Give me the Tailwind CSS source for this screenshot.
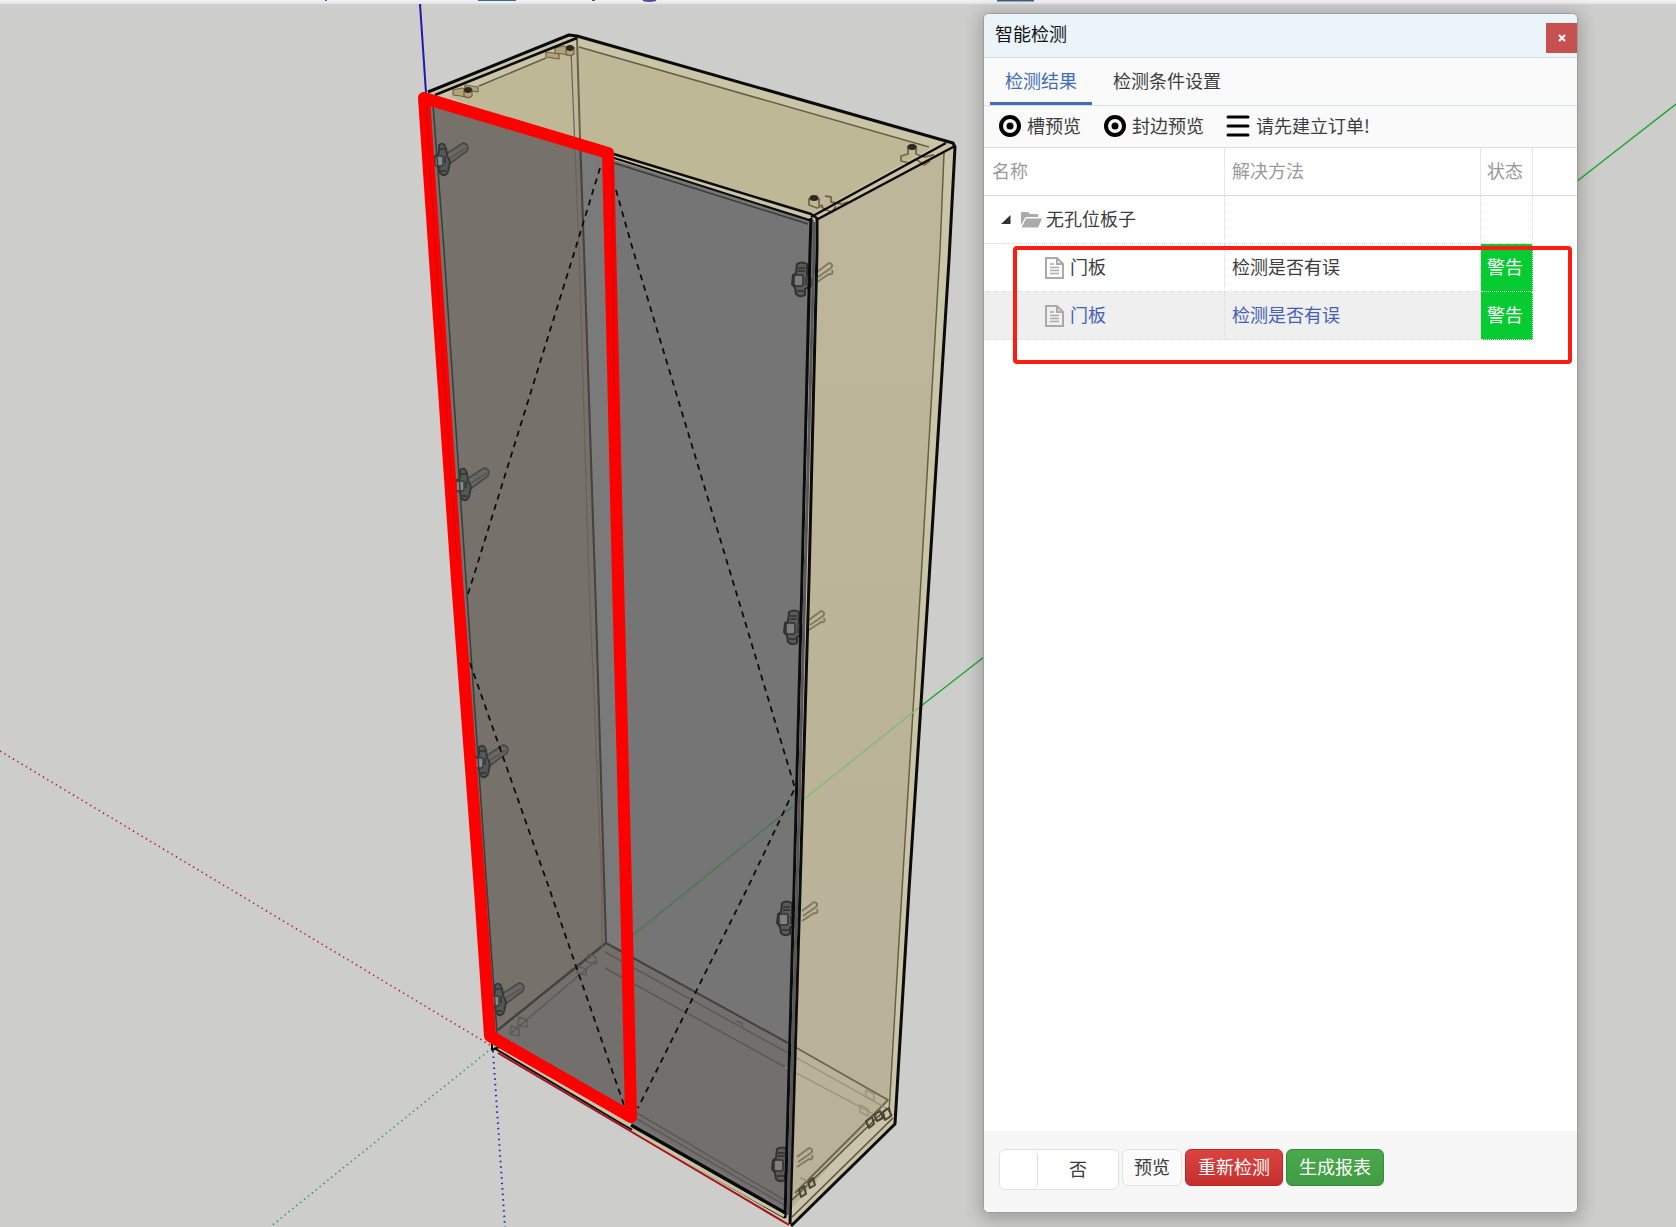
<!DOCTYPE html>
<html lang="zh-CN">
<head>
<meta charset="utf-8">
<meta name="viewport" content="width=device-width, initial-scale=1">
<title>智能检测</title>
<script src="https://cdn.jsdelivr.net/npm/@tailwindcss/browser@4"></script>
</head>
<body class="bg-[#cdcdcb] font-['Noto_Sans_CJK_SC',sans-serif] text-[18px] leading-6 text-[#3c3c3c]">
<main class="relative flex min-h-screen justify-end overflow-hidden pt-[13px] pr-[98px] pb-[14px]">

  <!-- 3D viewport -->
  <svg class="absolute inset-0 h-full w-full" viewBox="0 0 1676 1227" preserveAspectRatio="xMidYMid slice" role="img" aria-label="柜体模型" fill="none" stroke-linejoin="round">
    <defs>
      <linearGradient id="strip" x1="0" y1="0" x2="0" y2="1"><stop offset="0" stop-color="#f3f3f7"/><stop offset="0.6" stop-color="#ececee"/><stop offset="1" stop-color="#cdcdcb"/></linearGradient>
      <linearGradient id="side" x1="0" y1="0" x2="0" y2="1"><stop offset="0" stop-color="#bdb69a"/><stop offset="1" stop-color="#b9b298"/></linearGradient>
      <g id="hingeL">
        <path d="M3 -6 L20 -17 Q27 -16 24 -9 L5 5" stroke="#4a4a48" stroke-width="1.8" fill="#696764"/>
        <path d="M6 -1 L23 -12" stroke="#50504e" stroke-width="1.2"/>
        <path d="M-4 -15 Q1 -19 3 -12 L4 -5 L7 2 L5 12 Q2 18 -3 13 L-4 7 L-8 5 V-4 L-4 -7 Z" fill="#555756" stroke="#333635" stroke-width="1.8"/>
        <rect x="-8" y="-4" width="8" height="10" rx="2" fill="#85898a" stroke="#383b3a" stroke-width="1.3"/>
        <path d="M-3 -11 h5 M-2 11 h5 M2 -4 v7" stroke="#2f3130" stroke-width="1.3"/>
      </g>
      <g id="hingeR">
        <path d="M16 -8 L28 -17 Q33 -16 30 -12 L17 -3 M16 2 L28 -6 Q33 -5 31 -10" stroke="#807960" stroke-width="2"/>
        <path d="M-4 -16 Q1 -19 6 -16 L6 -5 L11 0 L10 6 L4 9 L4 15 Q-1 18 -5 14 L-6 8 L-9 4 L-8 -5 L-5 -7 Z" fill="#595a59" stroke="#303130" stroke-width="2"/>
        <rect x="-7" y="-5" width="9" height="11" rx="2" fill="#7d7f7e" stroke="#303130" stroke-width="1.5"/>
        <path d="M-3 -12 h7 M-3 -9 h7 M-4 11 h7 M5 -3 v8" stroke="#303130" stroke-width="1.3"/>
      </g>
      <g id="peg" stroke="#6f6248" stroke-width="1.2" fill="#b3a478">
        <path d="M-13 -1 L-4 -3 L3 1 V7 L-5 5 L-13 4 Z"/>
        <path d="M-2 -1 V5 Q2 8 6 5 V-2"/>
        <ellipse cx="2" cy="-1" rx="4" ry="3" fill="#2e2822" stroke="none"/>
      </g>
    </defs>

    <rect width="1676" height="6" y="-1" fill="url(#strip)"/>
    <path d="M478 0h38" stroke="#2f7280" stroke-width="2"/>
    <path d="M997 0h37" stroke="#3c5f80" stroke-width="3"/>
    <path d="M643 0q6 2 13 0M325 0h2M592 0h3" stroke="#5548a0" stroke-width="2"/>

    <!-- axes -->
    <path d="M420 4L426 93" stroke="#2019b0" stroke-width="2"/>
    <path d="M1576 182L1676 104M984 657L921 706" stroke="#1ca82c" stroke-width="1.5"/>
    <path d="M0 751L490 1045" stroke="#b8202a" stroke-width="1.5" stroke-dasharray="1.5 3.5"/>
    <path d="M492 1048L270 1227" stroke="#2f9e52" stroke-width="1.5" stroke-dasharray="1.5 3.5"/>
    <path d="M493 1051L505 1227" stroke="#2a2ab0" stroke-width="2" stroke-dasharray="1.5 4"/>

    <!-- carcass -->
    <path d="M428 94L573 36L955 144L929 580L909 890L895 1124L791 1226L494 1050Z" fill="#cac4a8"/>
    <path d="M448 97L578 46L930 148L811 215L607 152Z" fill="#bfb897"/>
    <path d="M818 219L944 151L921 580L902 890L888 1102L792 1208L800 890L809 580Z" fill="url(#side)"/>

    <!-- doors -->
    <path d="M430 104L607 158L814 220L802 580L794 890L787 1213L632 1124L490 1037Z" fill="#757575"/>
    <path d="M430 104L580 150L584 250L595 580L606 943L495 1032Z" fill="#77716c"/>
    <path d="M606 943L788 1043L787 1210L630 1120L497 1035Z" fill="#736f6c"/>
    <path d="M581 152L614 160L630 955L606 943L595 580Z" fill="#7a7a7a"/>

    <path d="M577 38L580 138" stroke="#67604a" stroke-width="2"/>
    <g stroke="#45413d" stroke-width="2">
      <path d="M580 138L584 250L595 580L606 943L788 1043"/>
      <path d="M606 943L498 1030" stroke-width="2.5"/>
      <path d="M571 50L579 250L589 580L602 890V948" stroke="#68625a" stroke-width="1.2"/>
      <path d="M605 952L788 1053M605 968L785 1067M597 960L510 1034M637 1113L786 1201M637 1119L786 1206" stroke="#5c5956" stroke-width="1.5"/>
      <path d="M788 1043L888 1100L795 1193" stroke="#6d6650" stroke-width="1.8"/>
      <path d="M788 1053L886 1108M785 1067L881 1118" stroke="#968f75" stroke-width="1.3"/>
    </g>
    <path d="M588 954l8 3v7l-9-2zM578 966l8 3v6l-9-2zM519 1017l8 3v7l-9-2zM511 1026l8 3v7l-9-2zM736 1021l6 2v5" stroke="#5d5a57" stroke-width="1.5"/>
    <g stroke="#665f48" stroke-width="1.5">
      <path d="M579 47L929 147M479 86L546 58M944 153L940 250L921 580L902 890L889 1112"/>
      <path d="M893 1118L792 1217M887 1108L792 1200" stroke="#57513e"/>
      <path d="M866 1090l8 4v7l-8-4zM860 1105l8 4v7l-8-4zM800 1178l8 3v6" stroke="#9b9379"/>
      <path d="M866 1121l6-4 2 7-5 4zM874 1115l6-4 3 7-6 3zM883 1112l6-4 2 8-6 4zM889 1118l3-4M799 1190l5-4 2 8-5 3zM808 1182l5-4 2 7-5 3z" stroke="#4a4435" stroke-width="2"/>
    </g>

    <path d="M921 706L803 800" stroke="#86b880" stroke-width="1.5"/>
    <path d="M793 806L633 935" stroke="#467a4e" stroke-width="1.5"/>

    <!-- hardware -->
    <path d="M465 85L478 87V92L465 90ZM546 52L559 54V59L546 57Z" fill="#b3a478" stroke="#6f6248" stroke-width="1.2"/>
    <use href="#peg" x="466" y="91"/><use href="#peg" x="568" y="49"/>
    <path d="M908 146v8l-7 2v5l8 2l7-4l8 6l6-4M916 146v8l8 3l10-2M809 198v7l8 3l6-3M819 198v7l7 5l6 2l4-6M825 196l6 1v5l10 2l7-2" stroke="#75664a" stroke-width="1.8"/>
    <ellipse cx="912" cy="147" rx="4.500" ry="3" fill="#2e2822"/>
    <ellipse cx="814" cy="198" rx="4.500" ry="3" fill="#2e2822"/>
    <use href="#hingeL" x="443" y="160"/><use href="#hingeL" x="464" y="485"/><use href="#hingeL" x="483" y="762"/><use href="#hingeL" x="499" y="1000"/>
    <use href="#hingeR" x="801" y="280"/><use href="#hingeR" x="793" y="628"/><use href="#hingeR" x="786" y="919"/><use href="#hingeR" x="781" y="1165"/>

    <!-- outlines -->
    <g stroke="#0b0b0b" stroke-width="3">
      <path d="M428 92L569 35L577 36L953 143L955 147L949 260L929 580L909 890L895 1124L791 1226"/>
      <path d="M435 95L577 38M811 217L946 143" stroke-width="2.5"/>
      <path d="M607 152L811 214L818 219L955 146" stroke-width="2.5"/>
      <path d="M614 158L812 221" stroke-width="2"/>
      <path d="M614 163L808 224" stroke="#3a3a3a" stroke-width="1.5"/>
      <path d="M817 219V250L809 580L800 890L790 1224"/>
      <path d="M811 218L810 250L802 580L794 890L785 1218"/>
      <path d="M631 1125L787 1214" stroke-width="3.5"/>
      <path d="M494 1048L622 1124L785 1218" stroke-width="2"/>
      <path d="M433 104L444 250L466 580L487 890L497 1033" stroke="#32413c" stroke-width="1.5"/>
      <path d="M492 1042v8l7-3" stroke-width="2"/>
    </g>
    <path d="M814 222V250L805 580L797 890L788 1215" stroke="#55555a" stroke-width="3"/>
    <path d="M632 1130L784 1216" stroke="#c9c3a8" stroke-width="3"/>
    <path d="M498 1053L620 1125L789 1225" stroke="#a3121b" stroke-width="2"/>

    <!-- door opening marks -->
    <g stroke="#0c0c0c" stroke-width="1.8" stroke-dasharray="6 5">
      <path d="M600 168L575 250L474 575L467 597M470 663L548 885L624 1105"/>
      <path d="M616 190L633 250L731 575L795 788L748 887L638 1108"/>
    </g>

    <path d="M424 98L608 153L618 580L626 890L631 1117L490 1036L480 890L457 580L435 260Z" stroke="#fd0000" stroke-width="12"/>
    <path d="M426 104L436 260L457 560M612 160L614 400" stroke="#c2100e" stroke-width="1"/>
  </svg>

  <!-- Dialog -->
  <section class="relative flex w-[595px] max-w-full flex-col overflow-hidden rounded-md border border-[#9c9c9c] bg-white shadow-[0_4px_16px_4px_rgba(0,0,0,0.2)]" aria-label="智能检测">
    <header class="flex h-11 shrink-0 items-center justify-between border-b border-[#cfe0e3] bg-[#eaf4f9] pl-[11px] text-[#111]">
      <h1 class="pb-1.5">智能检测</h1>
      <button type="button" aria-label="关闭" class="mt-1 flex h-[30px] w-[31px] items-center justify-center bg-[#c75050] text-white">
        <svg class="h-2 w-2" viewBox="0 0 8 8" stroke="currentColor" stroke-width="2"><path d="M1 1L7 7M7 1L1 7"/></svg>
      </button>
    </header>

    <nav class="flex h-12 shrink-0 border-b border-[#d9dfe1] bg-[#fafafa] pl-1.5">
      <a href="#result" class="w-[102px] border-b-3 border-[#416cb8] pt-2.5 text-center text-[#416cb8]">检测结果</a>
      <a href="#conditions" class="px-[21px] pt-2.5">检测条件设置</a>
    </nav>

    <div class="flex h-[42px] shrink-0 items-center border-b border-[#dcdcdc] bg-[#fafafa] pb-0.5 pl-[15px]">
      <button type="button" class="flex items-center gap-1.5">
        <svg class="h-[22px] w-[22px]" viewBox="0 0 22 22" fill="none"><circle cx="11" cy="11" r="9" stroke="#000" stroke-width="4"/><circle cx="11" cy="11" r="3.500" fill="#000"/></svg>
        <span class="pb-0.5">槽预览</span>
      </button>
      <button type="button" class="ml-[23px] flex items-center gap-1.5">
        <svg class="h-[22px] w-[22px]" viewBox="0 0 22 22" fill="none"><circle cx="11" cy="11" r="9" stroke="#000" stroke-width="4"/><circle cx="11" cy="11" r="3.500" fill="#000"/></svg>
        <span class="pb-0.5">封边预览</span>
      </button>
      <button type="button" class="ml-[22px] flex items-center gap-1.5">
        <svg class="h-6 w-6" viewBox="0 0 24 24" stroke="#000" stroke-width="3" stroke-linecap="round"><path d="M2 3H22M2 12H22M2 21H22"/></svg>
        <span class="pb-0.5">请先建立订单!</span>
      </button>
    </div>

    <div class="relative flex-1" id="result">
      <table class="w-full table-fixed border-separate border-spacing-0 text-left">
        <colgroup><col class="w-[241px]"><col class="w-[256px]"><col class="w-[52px]"><col></colgroup>
        <thead class="text-[#999]">
          <tr class="h-12">
            <th class="border-r border-b border-[#dcdcdc] border-r-[#e8e8e8] pb-1 pl-2 font-normal">名称</th>
            <th class="border-r border-b border-[#dcdcdc] border-r-[#e8e8e8] pb-1 pl-[7px] font-normal">解决方法</th>
            <th class="border-r border-b border-[#dcdcdc] border-r-[#e8e8e8] pb-1 pl-1.5 font-normal">状态</th>
            <td class="border-b border-[#dcdcdc]"></td>
          </tr>
        </thead>
        <tbody>
          <tr class="h-12">
            <td class="border-r border-b border-dotted border-[#ddd] pl-[17px]">
              <div class="flex items-center">
                <svg class="h-[9px] w-[10px]" viewBox="0 0 10 9"><path d="M9.500 0V9H0Z" fill="#333"/></svg>
                <svg class="mr-1 ml-2.5 h-[17px] w-[21px]" viewBox="0 0 21 17" fill="#aaa"><path d="M0 14V2Q0 1 1 1H7L9 3H16Q17 3 17 4V6H6Q4.500 6 4 7Z"/><path d="M0.500 16.500L4.500 8.500Q5 7.500 6 7.500H21L17.500 15.500Q17 16.500 16 16.500Z"/></svg>
                <span class="pb-1">无孔位板子</span>
              </div>
            </td>
            <td class="border-r border-b border-dotted border-[#ddd]"></td>
            <td class="border-r border-b border-dotted border-[#ddd]"></td>
            <td></td>
          </tr>
          <tr class="h-12">
            <td class="border-r border-b border-dotted border-[#ddd] pl-[61px]">
              <div class="flex items-center gap-1.5">
                <svg class="h-[22px] w-[19px]" viewBox="0 0 19 22" fill="none" stroke="#aaa" stroke-width="2"><path d="M1 1H12L18 7V21H1Z"/><path d="M12 1V7H18"/><path d="M5 7H9M5 10.500H14M5 13.500H14M5 16.500H14" stroke-width="1.500"/></svg>
                <span class="pb-1">门板</span>
              </div>
            </td>
            <td class="border-r border-b border-dotted border-[#ddd] pb-1 pl-[7px]">检测是否有误</td>
            <td class="border-r border-b border-dotted border-[#d5f5dc] bg-[#06cb31] pb-1 pl-1.5 text-white">警告</td>
            <td></td>
          </tr>
          <tr class="h-12 text-[#4560b8]">
            <td class="border-r border-b border-dotted border-[#ddd] bg-[#efefef] pl-[61px]">
              <div class="flex items-center gap-1.5">
                <svg class="h-[22px] w-[19px]" viewBox="0 0 19 22" fill="none" stroke="#aaa" stroke-width="2"><path d="M1 1H12L18 7V21H1Z"/><path d="M12 1V7H18"/><path d="M5 7H9M5 10.500H14M5 13.500H14M5 16.500H14" stroke-width="1.500"/></svg>
                <span class="pb-1">门板</span>
              </div>
            </td>
            <td class="border-r border-b border-dotted border-[#ddd] bg-[#efefef] pb-1 pl-[7px]">检测是否有误</td>
            <td class="border-r border-b border-dotted border-[#d5f5dc] bg-[#06cb31] pb-1 pl-1.5 text-white">警告</td>
            <td></td>
          </tr>
        </tbody>
      </table>
      <div class="pointer-events-none absolute top-[98px] right-[5px] left-[29px] h-[118px] rounded-sm border-4 border-[#fb1d12]"></div>
    </div>

    <footer class="flex h-[81px] shrink-0 items-start gap-[3px] bg-[#f7f7f7] pt-[18px] pl-[15px]">
      <label class="flex h-[41px] w-[120px] cursor-pointer rounded-md border border-[#e2e2e2] bg-white">
        <input type="checkbox" class="sr-only">
        <span class="w-[38px] rounded-md border-r border-[#ddd]"></span>
        <span class="flex flex-1 items-center justify-center pb-1">否</span>
      </label>
      <button type="button" class="h-[37px] w-[60px] rounded-md border border-[#e2e2e2] bg-[#fbfbfb] pb-1">预览</button>
      <button type="button" class="h-[37px] w-[98px] rounded-md border border-[#b52b27] bg-linear-to-b from-[#dc4340] to-[#c62f2c] pb-1 text-white">重新检测</button>
      <button type="button" class="h-[37px] w-[98px] rounded-md border border-[#358a38] bg-linear-to-b from-[#4aa94c] to-[#419c43] pb-1 text-white">生成报表</button>
    </footer>
  </section>
</main>
</body>
</html>
